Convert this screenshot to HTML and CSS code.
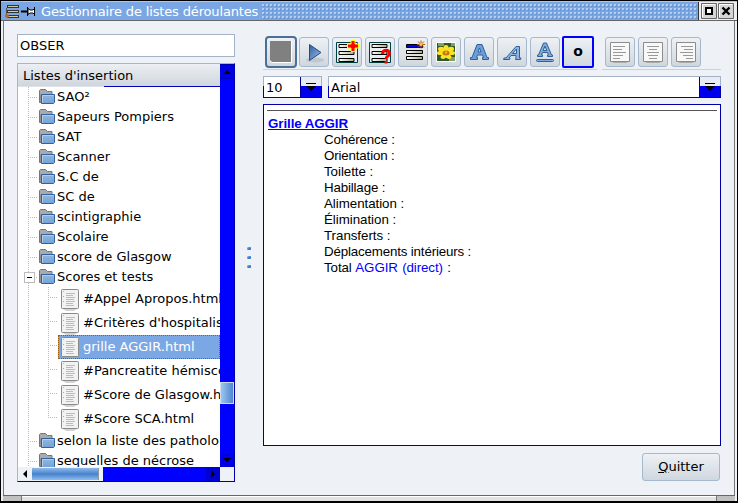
FILE: index.html
```html
<!DOCTYPE html>
<html lang="fr">
<head>
<meta charset="utf-8">
<title>Gestionnaire de listes déroulantes</title>
<link rel="stylesheet" href="styles.css">
</head>
<body>
<svg width="0" height="0" class="defs">
  <defs>
    <linearGradient id="fold" x1="0" y1="0" x2="0" y2="1"><stop offset="0" stop-color="#94b6dc"/><stop offset="1" stop-color="#74a2d8"/></linearGradient>
    <linearGradient id="steel" x1="0" y1="0" x2="1" y2="1"><stop offset="0" stop-color="#2f5f9c"/><stop offset="1" stop-color="#9cc0e8"/></linearGradient>
    <linearGradient id="bar" x1="0" y1="0" x2="1" y2="0"><stop offset="0" stop-color="#fff"/><stop offset="1" stop-color="#b0ad84"/></linearGradient>
    <symbol id="folder" viewBox="0 0 16 15">
      <path d="M.5 13.500V1.500L1.500.5h5l2 2h4.500v3h-11v8z" fill="#aaa" stroke="#777"/>
      <path d="M2.500 5.500h13v8l-1 1h-12z" fill="url(#fold)" stroke="#2d62a5"/>
      <path d="M3.500 13.500V6.500h11" fill="none" stroke="#b4cdea"/>
    </symbol>
    <symbol id="doc" viewBox="0 0 18 22">
      <path d="M2 20.500h14l-3 1H5z" fill="#aaa"/>
      <rect x=".5" y=".5" width="17" height="19" rx=".8" fill="#f2f2f2" stroke="#8a8a8a"/>
      <path d="M2 2.500h.8M2 7.500h1M2 12.500h1" stroke="#aaa"/>
      <path d="M5 4.500h9M5 6.500h7M5 8.500h9M5 10.500h8M5 12.500h9M5 14.500h7M5 16.500h8" stroke="#bbb"/>
    </symbol>
    <symbol id="bars" viewBox="0 0 20 20">
      <path d="M2 1.500h15v3H2zM2 8.500h15v3H2zM2 15.500h15v3H2z" fill="url(#bar)" stroke="#000"/>
    </symbol>
  </defs>
</svg>
<div class="window">
  <header class="titlebar">
    <svg class="app-icon" width="15" height="13" viewBox="0 0 15 13"><path d="M2 1.500h12M2 6.500h12M2 11.500h12" stroke="#333" stroke-width="3"/><path d="M3 1.500h10M3 6.500h10M3 11.500h10" stroke="#d3ca98"/><path d="M1.500 3v7" stroke="#555"/><circle cx="2" cy="11" r="2" fill="#b56b22"/></svg>
    <svg class="pin" width="15" height="9" viewBox="0 0 15 9"><path d="M0 4.500h6" stroke="#000" stroke-width="2"/><path d="M6.500 0v9M13.500 0v9" stroke="#000"/><path d="M7 1.500l2 1.500h3l1.500-1.500v6L12 6H9L7 7.500z" fill="#fff" stroke="#000"/></svg>
    <h1>Gestionnaire de listes déroulantes</h1>
    <span class="grip"></span>
    <span class="winbtns">
      <svg width="16" height="16" viewBox="0 0 16 16"><path d="M.5.5h15v15H.5z" fill="#d5d5d5" stroke="#666"/><path d="M1.500 14V1.500H14" stroke="#fff" fill="none"/><path d="M5 5h6v6H5z" fill="#fff" stroke="#000" stroke-width="2"/></svg>
      <svg width="16" height="16" viewBox="0 0 16 16"><path d="M.5.5h15v15H.5z" fill="#d5d5d5" stroke="#666"/><path d="M1.500 14V1.500H14" stroke="#fff" fill="none"/><path d="M4.500 4.500l7 7M11.500 4.500l-7 7" stroke="#000" stroke-width="2.400"/></svg>
    </span>
  </header>
  <main class="content">
    <aside class="side">
      <div class="search">OBSER</div>
      <section class="panel">
        <div class="view">
          <div class="head">Listes d'insertion</div>
          <ul class="tree">
            <li><svg><use href="#folder"/></svg>SAO²</li>
            <li><svg><use href="#folder"/></svg>Sapeurs Pompiers</li>
            <li><svg><use href="#folder"/></svg>SAT</li>
            <li><svg><use href="#folder"/></svg>Scanner</li>
            <li><svg><use href="#folder"/></svg>S.C de</li>
            <li><svg><use href="#folder"/></svg>SC de</li>
            <li><svg><use href="#folder"/></svg>scintigraphie</li>
            <li><svg><use href="#folder"/></svg>Scolaire</li>
            <li><svg><use href="#folder"/></svg>score de Glasgow</li>
            <li class="open"><svg><use href="#folder"/></svg>Scores et tests</li>
            <li class="file"><span><svg><use href="#doc"/></svg>#Appel Apropos.html</span></li>
            <li class="file"><span><svg><use href="#doc"/></svg>#Critères d'hospitalis</span></li>
            <li class="file selected"><span><svg><use href="#doc"/></svg>grille AGGIR.html</span></li>
            <li class="file"><span><svg><use href="#doc"/></svg>#Pancreatite hémisco</span></li>
            <li class="file"><span><svg><use href="#doc"/></svg>#Score de Glasgow.h</span></li>
            <li class="file last"><span><svg><use href="#doc"/></svg>#Score SCA.html</span></li>
            <li><svg><use href="#folder"/></svg>selon la liste des patholo</li>
            <li><svg><use href="#folder"/></svg>sequelles de nécrose</li>
          </ul>
        </div>
        <div class="vbar">
          <svg width="14" height="14"><path d="M3 9h8L7 5z"/></svg>
          <i class="vthumb"></i>
          <svg width="14" height="14"><path d="M3 5h8L7 9z"/></svg>
        </div>
        <div class="hbar">
          <svg class="pale" width="14" height="14"><path d="M9 3v8L5 7z"/></svg>
          <i class="hthumb"></i><i class="htrack"></i>
          <svg width="14" height="14"><path d="M5 3v8l4-4z"/></svg>
        </div>
      </section>
    </aside>
    <div class="splitter"><i></i><i></i><i></i></div>
    <section class="main">
      <div class="toolbars">
        <div class="toolbar">
          <button class="big stop"><svg width="24" height="24"><path d="M1 1h22v22H3l-2-2z" fill="#fff"/><path d="M1 1h21v21H3l-2-2z" fill="#808080"/></svg></button>
          <button><svg width="24" height="24"><ellipse cx="13" cy="20" rx="9" ry="2.500" fill="#c0c7ce"/><path d="M7.500 4.500v16L19 12.500z" fill="url(#steel)" stroke="#244c80"/></svg></button>
          <button><svg width="24" height="24"><path d="M1.500 2.500h21v20h-21z" fill="#e7eef0" stroke="#003f3f"/><use href="#bars" x="2" y="3" width="20" height="20"/><path d="M16 .5h4v3.500h3.500v4H20v3.500h-4V8h-3.500V4H16z" fill="red" stroke="#ff0" stroke-width="1"/></svg></button>
          <button><svg width="24" height="24"><path d="M1.500 2.500h21v20h-21z" fill="#e7eef0" stroke="#003f3f"/><use href="#bars" x="2" y="3" width="20" height="20"/><path d="M14.500 14c0-5 7-5 7-1s-3.500 2.500-3.500 6M18 21v2.500" fill="none" stroke="red" stroke-width="2.800"/></svg></button>
          <button><svg width="24" height="24"><path d="M5.500 10.500h16v3h-16zM5.500 16.500h16v3h-16z" fill="url(#bar)" stroke="#000"/><path d="M5.500 4.500h16v3h-16z" fill="#00f" stroke="#000"/><path d="M16 4.500h8M20 .500v8M17 1.500l6 6M23 1.500l-6 6" stroke="#b05c08"/><circle cx="20" cy="4.500" r="1.500" fill="#ffc94f"/></svg></button>
          <button><svg width="24" height="24"><path d="M2 2h20v20H2z" fill="#fff"/><path d="M3 3h18v18H3z" fill="#30592a"/><path d="M4 3h6v3H4zM15 17h6v4h-6zM17 3h4v3h-4z" fill="#7fa367"/><g fill="#ffe323"><ellipse cx="12" cy="7.500" rx="2.500" ry="2.500"/><ellipse cx="7" cy="9" rx="3" ry="2.300"/><ellipse cx="17" cy="9" rx="3" ry="2.300"/><ellipse cx="6" cy="13" rx="3" ry="2"/><ellipse cx="18" cy="13" rx="3" ry="2"/><ellipse cx="9" cy="17" rx="2.500" ry="2"/><ellipse cx="15" cy="17" rx="2.500" ry="2"/><circle cx="12" cy="13" r="5"/></g><ellipse cx="12" cy="13" rx="3.500" ry="2.500" fill="#b97812"/><circle cx="12" cy="12.500" r="1.300" fill="#efb51c"/></svg></button>
          <button><svg width="24" height="24" fill="#6b9fdb" stroke="#315e96"><path fill-rule="evenodd" d="M3.500 19.500v-2h1.500l5-13h5l5 13h1.500v2h-6v-2h1l-1-2.500h-5l-1 2.500h1v2zM11 12h3l-1.500-4z"/></svg></button>
          <button><svg width="24" height="24" fill="#8db5e3" stroke="#315e96"><path fill-rule="evenodd" d="M3.500 19.500l.500-1.500h2L16 6.500h3.500V18H21l-.500 1.500h-5l.500-1.500V15.500h-5L9 18h1l-.500 1.500zM12.500 13.500h4V9z"/></svg></button>
          <button><svg width="24" height="24" fill="#7facdf" stroke="#315e96"><path fill-rule="evenodd" d="M4.500 16.500V15h1l5-12h3l5 12h1v1.500h-5V15h1l-1-2.500h-5L8.500 15h1v1.500zM10.200 10.500h3.600L12 6z"/><rect x="3.500" y="19.500" width="17" height="2" rx="1"/></svg></button>
          <button class="big bullet">o</button>
        </div>
        <div class="toolbar align">
          <button><svg width="24" height="24"><path d="M4 22h16l-2 1H6z" fill="#aaa"/><path d="M2.500 2.500h19v19h-19z" fill="#f8f8f8" stroke="#8c8c8c"/><path d="M5 6.500h12M5 9.500h9M5 12.500h13M5 15.500h10M5 18.500h7" stroke="#999"/></svg></button>
          <button><svg width="24" height="24"><path d="M4 22h16l-2 1H6z" fill="#aaa"/><path d="M2.500 2.500h19v19h-19z" fill="#f8f8f8" stroke="#8c8c8c"/><path d="M6 6.500h12M8 9.500h8M6 12.500h12M7 15.500h10M8 18.500h8" stroke="#999"/></svg></button>
          <button><svg width="24" height="24"><path d="M4 22h16l-2 1H6z" fill="#aaa"/><path d="M2.500 2.500h19v19h-19z" fill="#f8f8f8" stroke="#8c8c8c"/><path d="M7 6.500h12M10 9.500h9M6 12.500h13M9 15.500h10M12 18.500h7" stroke="#999"/></svg></button>
        </div>
      </div>
      <div class="combos">
        <div class="combo size"><span>10</span><i><svg width="20" height="20"><path d="M5 6h10v1H5zM5 9h10l-5 5z"/></svg></i></div>
        <div class="combo face"><span>Arial</span><i><svg width="20" height="20"><path d="M5 6h10v1H5zM5 9h10l-5 5z"/></svg></i></div>
      </div>
      <article class="editor">
        <h2>Grille AGGIR</h2>
        <p>Cohérence :</p>
        <p>Orientation :</p>
        <p class="wide">Toilette :</p>
        <p>Habillage :</p>
        <p class="wide">Alimentation :</p>
        <p class="wide">Élimination :</p>
        <p class="wide">Transferts :</p>
        <p>Déplacements intérieurs :</p>
        <p class="total">Total <a>AGGIR (direct)</a> :</p>
      </article>
      <button class="quit"><span><u>Q</u>uitter</span></button>
    </section>
  </main>
  <footer class="resize"><i></i><b></b><i></i></footer>
</div>
</body>
</html>
```
FILE: styles.css
```css
* { box-sizing: border-box; }
body { margin: 0; font: 13px/20px "DejaVu Sans", sans-serif; color: #000; overflow: hidden; }
.defs { display: block; }
svg { display: block; flex: none; }
.window { width: 738px; height: 503px; background: #eef1f6; border: solid #000; border-width: 1px 1px 2px 1px; display: flex; flex-direction: column; overflow: hidden; }
.titlebar { height: 20px; flex: none; display: flex; align-items: center; background: #7aa7e4; border-top: 1px solid #aac9f2; border-bottom: 1px solid #666; padding-left: 4px; color: #fff; }
.titlebar .pin { margin-left: 1px; }
h1 { margin: 0 4px 0 5px; padding-top: 1px; font-size: 13px; font-weight: 400; line-height: 20px; letter-spacing: -.15px; white-space: nowrap; }
.grip { flex: 1; height: 15px; background: radial-gradient(circle at 1px 1px, #fff 0 .6px, transparent .8px) 0 0 / 4px 4px, radial-gradient(circle at 2px 2px, #5580bb 0 .6px, transparent .8px) 0 0 / 4px 4px; }
.winbtns { display: flex; gap: 1px; padding: 1px 2px 0; height: 18px; background: #eee; border-left: 1px solid #333; width: 39px; }
.content { flex: 1; min-height: 0; display: flex; margin: 0 2px 0 2px; border-left: 1px solid #777; border-right: 1px solid #777; padding: 13px 13px 0 13px; }
.side { width: 218px; display: flex; flex-direction: column; gap: 6px; }
.search { height: 23px; border: 1px solid #a3b2c6; background: #fff; padding: 1px 2px; line-height: 20px; }
.panel { width: 218px; height: 419px; display: grid; grid-template: 403px 15px / 202px 14px; border: 1px solid #a9b6c6; border-right-color: #00a; border-bottom-color: #00a; background: #eef1f6; }
.view { background: #fff; overflow: hidden; }
.head { height: 23px; padding-left: 5px; line-height: 23px; background: linear-gradient(#eceff3, #cfd6dd); border-bottom: 1px solid; border-image: linear-gradient(90deg, #dde2e8 86px, #00b 86px) 1; }
.tree { list-style: none; margin: 0; padding: 0; background: repeating-linear-gradient(#bbb 0 1px, transparent 1px 2px) 10px 0 / 1px 100% no-repeat; }
.tree li { height: 20px; padding-left: 21px; display: flex; gap: 2px; white-space: nowrap; background: repeating-linear-gradient(90deg, #bbb 0 1px, transparent 1px 2px) 12px 10px / 8px 1px no-repeat; }
.tree li > svg { width: 16px; height: 15px; margin-top: 2px; }
.tree .open { position: relative; }
.open::before { content: ""; position: absolute; left: 6px; top: 5px; width: 9px; height: 9px; border: 1px solid #bbb; background: linear-gradient(#000, #000) center / 5px 1px no-repeat #fff; }
.tree .file { height: 24px; line-height: 24px; padding-left: 40px; background: repeating-linear-gradient(90deg, #bbb 0 1px, transparent 1px 2px) 32px 10px / 8px 1px no-repeat, repeating-linear-gradient(#bbb 0 1px, transparent 1px 2px) 30px 0 / 1px 100% no-repeat; }
.tree .last { background-size: 8px 1px, 1px 11px; }
.file span { flex: 1; display: flex; gap: 4px; padding-left: 3px; }
.file span svg { width: 18px; height: 22px; margin-top: 2px; }
.selected span { background: #7ba8e5; color: #fff; outline: 1px dotted #a05a00; outline-offset: -1px; }
.vbar { background: #00f; display: flex; flex-direction: column; border-top: 1px solid #00a; }
.vbar svg { border-bottom: 1px solid #00c; background: #0000e6; }
.vthumb { height: 22px; margin: 303px 0 auto; border: 1px solid #cde; background: linear-gradient(90deg, #9ec5f0, #4f86ce); }
.hbar { grid-column: 1; display: flex; background: #eef1f6; height: 14px; }
.hbar svg { background: #0000d0; }
.hbar .pale { background: #eef1f6; }
.hthumb { width: 67px; margin-top: 1px; height: 12px; background: linear-gradient(#8fbbec, #4881cb 50%, #8dbcf0); border-right: 1px solid #89a; }
.htrack { flex: 1; margin-left: 4px; background: #00f; }
.splitter { width: 28px; display: flex; flex-direction: column; gap: 6px; padding-top: 213px; align-items: center; }
.splitter i { width: 4px; height: 3px; border-radius: 1px; background: linear-gradient(135deg, #a9c8ee, #2f78cc 60%); }
.main { width: 458px; display: flex; flex-direction: column; }
.toolbars { display: flex; gap: 5px; height: 36px; margin-top: 1px; }
.toolbar { display: flex; gap: 3px; height: 35px; padding: 1px 2px 2px; border-bottom: 1px solid #ccd1d7; width: 334px; align-items: center; flex: none; }
.toolbar.align { width: 119px; padding: 1px 3px 2px; }
button { font: inherit; color: inherit; padding: 0; margin: 0; border: 1px solid #a6b8cc; border-radius: 3px; background: linear-gradient(#eef1f5, #cfd7de); display: flex; align-items: center; justify-content: center; }
.toolbar button { width: 30px; height: 30px; flex: none; }
.toolbar .big { width: 32px; height: 32px; }
.toolbar .stop { border: 2px solid #4c6f98; border-radius: 4px; margin-right: -1px; }
.toolbar .bullet { border: 2px solid #00f; border-radius: 2px; font-weight: 700; font-size: 14px; line-height: 16px; margin-left: -1px; padding-bottom: 2px; }
.combos { display: flex; gap: 6px; height: 22px; margin-top: 5px; }
.combo { display: flex; border: 1px solid; border-image: linear-gradient(#a3b2c6 10px, #00a 10px) 1; background: #fff; }
.size { width: 59px; }
.face { width: 393px; }
.combo span { flex: 1; padding: 1px 0 0 2px; line-height: 20px; }
.combo i { width: 21px; background: linear-gradient(#e9edf2 9px, #00e 9px); border-left: 1px solid #009; }
.editor { height: 342px; margin-top: 6px; border: 1px solid #00a; background: linear-gradient(#555, #555) 3px 5px / 450px 1px no-repeat #fff; padding: 11px 4px; font: 13.333px/16px "Liberation Sans", Arial, sans-serif; }
h2 { margin: 0; font-size: 13.333px; line-height: 16px; letter-spacing: -.08px; text-decoration: underline; color: #00f; }
p { margin: 0 0 0 56px; letter-spacing: -.16px; }
.wide { letter-spacing: -.04px; }
.total { letter-spacing: -.1px; word-spacing: .8px; }
p a { color: #00f; }
.quit { width: 78px; height: 28px; margin: 7px 1px 0 auto; }
.resize { height: 6px; flex: none; display: flex; gap: 1px; background: #777; border-top: 1px solid #666; margin: 0 2px 0 2px; }
.resize i { width: 18px; background: #c0c0c0; }
.resize b { flex: 1; background: #e2e2e2; border-top: 1px solid #fff; }
```
